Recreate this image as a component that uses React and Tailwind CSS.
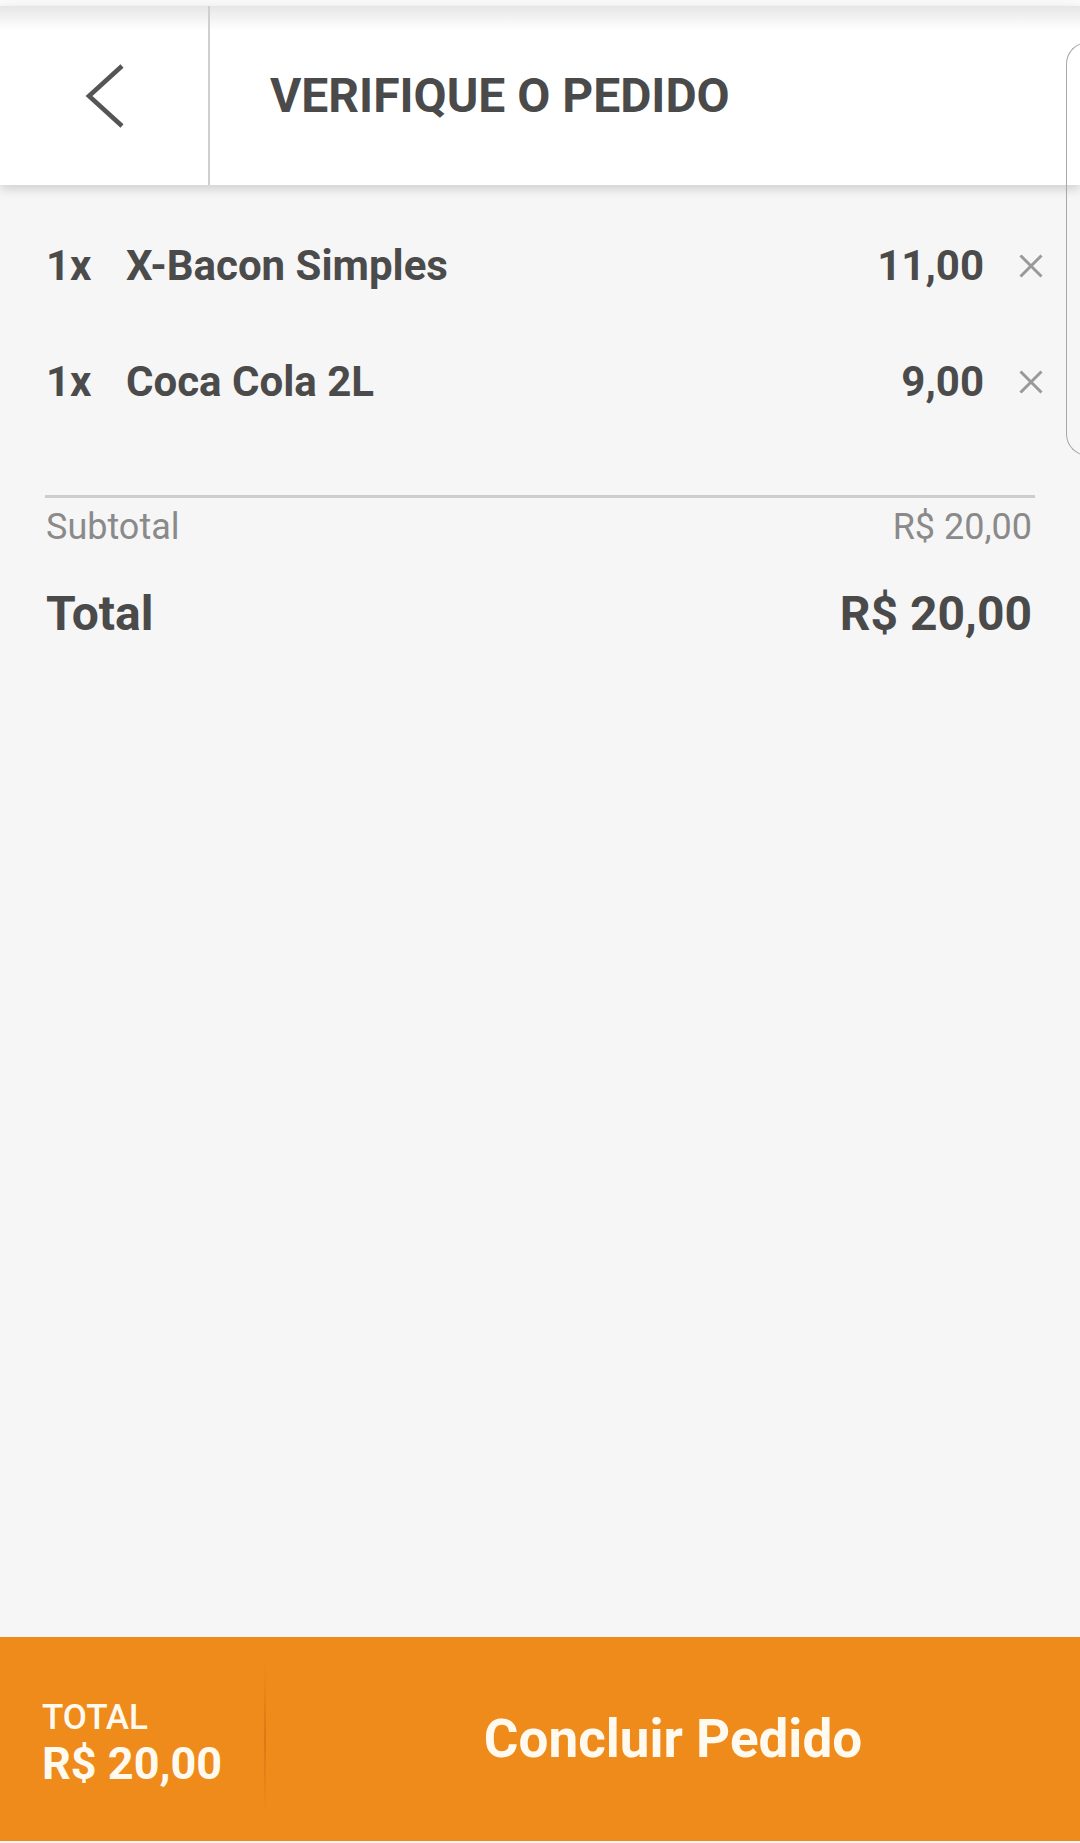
import React from "react";

const items = [
  { qty: "1x", name: "X-Bacon Simples", price: "11,00" },
  { qty: "1x", name: "Coca Cola 2L", price: "9,00" },
];

function CloseIcon() {
  return (
    <svg width="24" height="24" viewBox="0 0 24 24" className="block">
      <line x1="1.5" y1="1.5" x2="22.5" y2="22.5" stroke="#999999" strokeWidth="3" />
      <line x1="22.5" y1="1.5" x2="1.5" y2="22.5" stroke="#999999" strokeWidth="3" />
    </svg>
  );
}

export default function App() {
  return (
    <div
      className="relative w-[1080px] h-[1843px] bg-[#f6f6f6] flex flex-col overflow-hidden text-[#4b4b4b]"
      style={{ fontFamily: "Roboto, 'Noto Sans', sans-serif" }}
    >
      {/* top strip */}
      <div className="h-[6px] bg-[#fafafa] shrink-0" />

      {/* header */}
      <div className="relative z-10 h-[179px] shrink-0 bg-white flex shadow-[0_4px_10px_rgba(0,0,0,0.16)]">
        <div className="absolute inset-x-0 top-0 h-[24px] bg-gradient-to-b from-[#e6e6e6] to-white/0 pointer-events-none" />
        <div className="relative w-[210px] h-full border-r-2 border-[#cfcfcf] flex items-center justify-center">
          <svg width="42" height="64" viewBox="0 0 42 64" className="block ml-[2px]">
            <polyline points="38,2 5,32 38,62" fill="none" stroke="#555555" strokeWidth="4.6" />
          </svg>
        </div>
        <div className="relative flex items-center pl-[60px]">
          <span className="text-[48px] font-bold text-[#4a4a4a] leading-none">
            VERIFIQUE O PEDIDO
          </span>
        </div>
      </div>

      {/* content */}
      <div className="flex-1 flex flex-col pt-[23px]">
        <div className="flex flex-col">
          {items.map((it) => (
            <div key={it.name} className="h-[116px] flex items-center pl-[46px] pr-[37px]">
              <span className="w-[80px] text-[42px] font-bold leading-none">{it.qty}</span>
              <span className="flex-1 text-[42px] font-bold leading-none">{it.name}</span>
              <span className="text-[42px] font-bold leading-none">{it.price}</span>
              <span className="ml-[35px]">
                <CloseIcon />
              </span>
            </div>
          ))}
        </div>

        <div className="mx-[45px] mt-[55px] h-[3px] bg-[#cdcdcd]" />

        <div className="px-[46px] pr-[48px] h-[58px] flex items-center justify-between text-[36px] text-[#8a8a8a] leading-none">
          <span>Subtotal</span>
          <span>R$ 20,00</span>
        </div>

        <div className="px-[46px] pr-[48px] mt-[21px] h-[61px] flex items-end justify-between text-[48px] font-bold leading-none text-[#4a4a4a]">
          <span>Total</span>
          <span>R$ 20,00</span>
        </div>
      </div>

      {/* bottom bar */}
      <div className="h-[204px] shrink-0 bg-[#ef8b1a] flex items-stretch text-[#fffaf0]">
        <div className="w-[264px] flex flex-col justify-center pl-[42px] pt-[8px]">
          <span className="text-[35px] font-medium leading-none">TOTAL</span>
          <span className="text-[45px] font-bold leading-none mt-[6px]">R$ 20,00</span>
        </div>
        <div className="w-[2px] my-[26px] bg-gradient-to-b from-[#ef8b1a] via-[#d97a14] to-[#ef8b1a]" />
        <div className="flex-1 flex items-center justify-center">
          <span className="text-[53px] font-bold leading-none">Concluir Pedido</span>
        </div>
      </div>
      <div className="h-[2px] shrink-0 bg-[#f3f3f3]" />

      {/* edge panel overlay */}
      <div className="absolute left-[1066px] top-[42px] w-[40px] h-[414px] rounded-l-[22px] border-[1.5px] border-r-0 border-[#a8a8a8] pointer-events-none z-20" />
    </div>
  );
}
